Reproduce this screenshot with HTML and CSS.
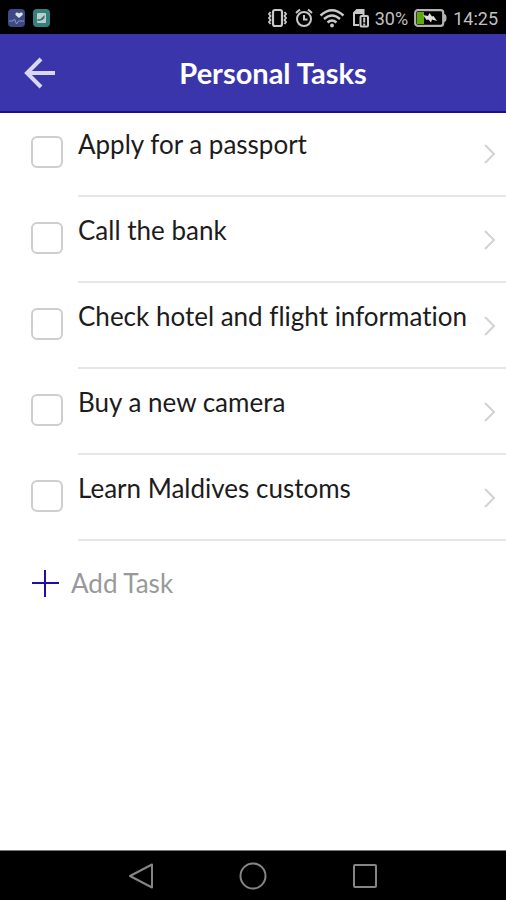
FILE: index.html
```html
<!DOCTYPE html>
<html lang="en">
<head>
<meta charset="utf-8">
<meta name="viewport" content="width=device-width, initial-scale=1">
<title>Personal Tasks</title>
<link rel="stylesheet" href="styles.css">
</head>
<body>
<div class="status">
  <div class="group notices">
    <svg width="17" height="18" viewBox="0 0 17 18"><rect width="17" height="18" rx="4" fill="#3d4a86"/><path d="M11 9L7.500 6Q7 3.500 9 3.500Q10.500 3.500 11 4.500Q12 3.500 13.500 3.500Q15.500 4 14.500 6Z" fill="#dce5df"/><path d="M1 12h4l1.500-2 2 5 2-3H16" fill="none" stroke="#8c96b8"/></svg>
    <svg width="17" height="18" viewBox="0 0 17 18"><rect width="17" height="18" rx="4" fill="#35807f"/><rect x="4" y="4" width="9" height="10" rx="1" fill="#b9cfcd"/><path d="M4.500 10q3 1 4-1l3-3v3q-2 3-7 3z" fill="#35706f"/></svg>
  </div>
  <div class="group system">
    <svg width="20" height="20" viewBox="0 0 20 20" fill="none" stroke="#c8c8c8"><rect x="6" y="2" width="9" height="16" rx="2" stroke-width="2.200"/><path d="M3.500 4L2 6l1.500 2L2 10l1.500 2L2 14l1.500 2M17.500 4L19 6l-1.500 2 1.500 2-1.500 2 1.500 2-1.500 2" stroke-width="1.800"/></svg>
    <svg width="20" height="20" viewBox="0 0 20 20" fill="none" stroke="#c8c8c8" stroke-width="2"><circle cx="11" cy="11" r="7"/><path d="M11 7v4.500h3.500M3 5L7 1.500M19 5L15 1.500"/></svg>
    <svg width="26" height="20" viewBox="0 0 26 20" fill="none" stroke="#c8c8c8" stroke-width="2.400"><path d="M1.500 7.500Q13-3 24.500 7.500M5 11Q13 4 21 11M8.500 14.500Q13 10.500 17.500 14.500"/><circle cx="13" cy="17.500" r="1.900" fill="#c8c8c8" stroke="none"/></svg>
    <svg width="18" height="20" viewBox="0 0 18 20" fill="none" stroke="#c8c8c8" stroke-width="2"><path d="M8 17H3V5l3-3h6.500v5"/><path d="M3 5l3-4h7v5H3z" fill="#c8c8c8" stroke="none"/><rect x="9.500" y="8" width="7.500" height="10.500" rx="1"/><path d="M13.200 9.500v5M13.200 15.500v2"/></svg>
    <span class="percent">30%</span>
    <svg width="33" height="18" viewBox="0 0 33 18"><rect x="1.200" y="1.200" width="28" height="15.600" rx="2.500" fill="none" stroke="#b4b4b4" stroke-width="2.200"/><path d="M30 5q2.500 0 2.500 4t-2.500 4z" fill="#b4b4b4"/><rect x="3" y="3" width="7" height="12" fill="#5fa80e"/><path d="M9 6l5 1 1.500-3 2.500 3.500 1.500-.5L23 12l-5-1.500-1 3-2.500-3-2 .5z" fill="#dedede"/></svg>
    <span class="clock">14:25</span>
  </div>
</div>
<header class="bar">
  <button class="back" type="button" aria-label="Back"><svg width="32" height="32" viewBox="0 0 32 32" fill="none" stroke="#d9d7f6" stroke-width="4"><path d="M31 16H4M17 2L3 16l14 14"/></svg></button>
  <h1 class="title">Personal Tasks</h1>
</header>
<main class="content">
  <ul class="tasks">
    <li class="task"><input class="check" type="checkbox" id="t1"><div class="detail"><label for="t1">Apply for a passport</label><svg class="chevron" viewBox="0 0 12 20"><path d="M1 1l9 9-9 9"/></svg></div></li>
    <li class="task"><input class="check" type="checkbox" id="t2"><div class="detail"><label for="t2">Call the bank</label><svg class="chevron" viewBox="0 0 12 20"><path d="M1 1l9 9-9 9"/></svg></div></li>
    <li class="task"><input class="check" type="checkbox" id="t3"><div class="detail"><label for="t3">Check hotel and flight information</label><svg class="chevron" viewBox="0 0 12 20"><path d="M1 1l9 9-9 9"/></svg></div></li>
    <li class="task"><input class="check" type="checkbox" id="t4"><div class="detail"><label for="t4">Buy a new camera</label><svg class="chevron" viewBox="0 0 12 20"><path d="M1 1l9 9-9 9"/></svg></div></li>
    <li class="task"><input class="check" type="checkbox" id="t5"><div class="detail"><label for="t5">Learn Maldives customs</label><svg class="chevron" viewBox="0 0 12 20"><path d="M1 1l9 9-9 9"/></svg></div></li>
  </ul>
  <button class="add" type="button"><svg width="27" height="27" viewBox="0 0 27 27" fill="none" stroke="#1c0fa8" stroke-width="2"><path d="M0 13h27M13 0v27"/></svg>Add Task</button>
</main>
<nav class="keys">
  <button type="button" aria-label="Back"><svg width="28" height="28" viewBox="0 0 28 28"><path d="M25 2.500v23L3 14z"/></svg></button>
  <button type="button" aria-label="Home"><svg width="28" height="28" viewBox="0 0 28 28"><circle cx="14" cy="14" r="12.500"/></svg></button>
  <button type="button" aria-label="Recent apps"><svg width="28" height="28" viewBox="0 0 28 28"><rect x="3" y="3" width="22" height="22" rx="1"/></svg></button>
</nav>
</body>
</html>
```
FILE: styles.css
```css
* {
  box-sizing: border-box;
}

body {
  margin: 0;
  min-height: 100vh;
  display: flex;
  flex-direction: column;
  background: #fff;
  color: #1c1c1c;
  font-family: Lato, "Open Sans", sans-serif;
  font-variant-ligatures: none;
}

button {
  border: 0;
  padding: 0;
  background: none;
  font: inherit;
  cursor: pointer;
}

svg {
  display: block;
  flex: none;
}

.status {
  display: flex;
  justify-content: space-between;
  align-items: center;
  height: 34px;
  padding: 2px 8px 0;
  background: #000;
  color: #c0c0c0;
  font-family: Roboto, sans-serif;
  font-size: 18px;
}

.group {
  display: flex;
  align-items: center;
}

.notices {
  gap: 8px;
}

.system {
  gap: 6px;
}

.bar {
  display: grid;
  grid-template-columns: 80px 1fr 40px;
  align-items: center;
  height: 79px;
  background: #3b35ab;
  border-bottom: 2px solid #1b0e8f;
}

.back {
  justify-self: center;
}

.title {
  margin: 0;
  text-align: center;
  color: #fff;
  font-size: 29px;
  font-weight: 700;
}

.content {
  flex: 1;
}

.tasks {
  display: flex;
  flex-direction: column;
  gap: 2px;
  margin: 0;
  padding: 0;
  list-style: none;
}

.task {
  display: flex;
  gap: 15px;
  padding-left: 31px;
}

.check {
  appearance: none;
  flex: none;
  width: 32px;
  height: 32px;
  margin: 23px 0 0;
  border: 2px solid #cecece;
  border-radius: 6px;
  background: #fff;
}

.check:checked {
  background: #3b35ab;
}

.detail {
  flex: 1;
  display: flex;
  justify-content: space-between;
  align-items: center;
  min-height: 84px;
  padding-right: 10px;
  border-bottom: 2px solid #e6e6e6;
  font-size: 26px;
  line-height: 32px;
  white-space: nowrap;
}

.detail label {
  align-self: flex-start;
  padding-top: 15px;
}

.chevron {
  width: 12px;
  height: 20px;
  fill: none;
  stroke: #d2d2d2;
  stroke-width: 2;
}

.add {
  display: flex;
  align-items: center;
  gap: 12px;
  margin: 26px 0 0 32px;
  color: #999;
  font-size: 26px;
  line-height: 32px;
}

.keys {
  display: flex;
  justify-content: center;
  align-items: center;
  gap: 84px;
  height: 50px;
  border-top: 1px solid #777;
  background: #000;
}

.keys svg {
  fill: none;
  stroke: #858585;
  stroke-width: 2;
  stroke-linejoin: round;
}
```
